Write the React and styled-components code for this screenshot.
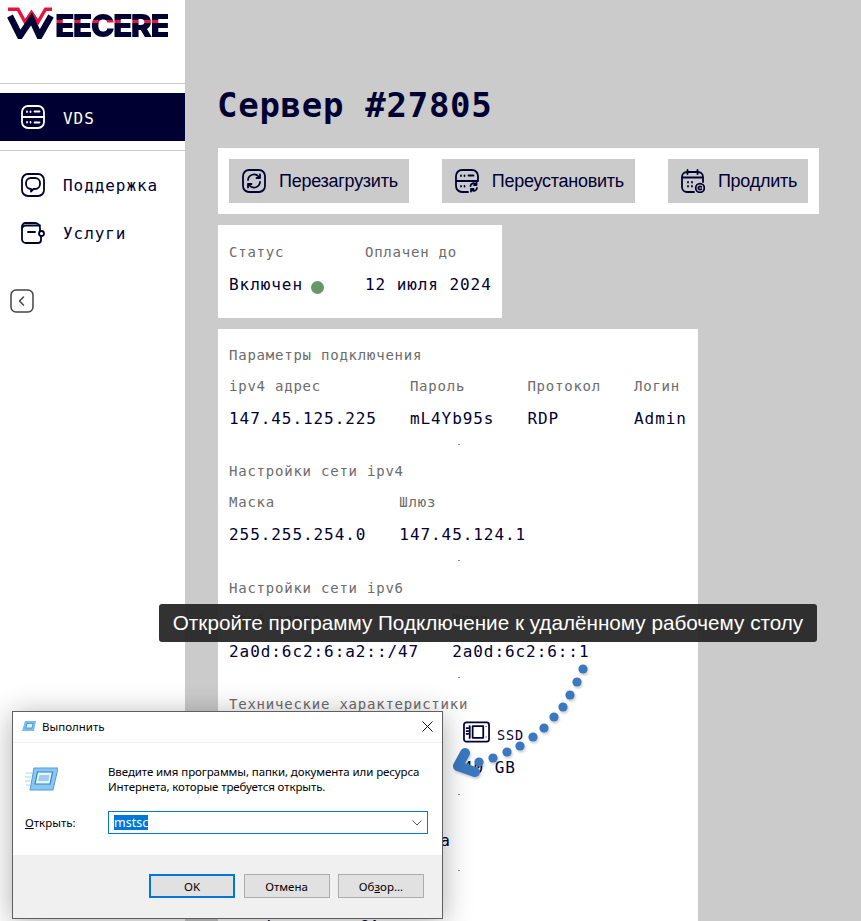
import React from "react";
import styled, { createGlobalStyle } from "styled-components";

const navy = "#000033";
const mono = `"DejaVu Sans Mono", "Liberation Mono", monospace`;

const Global = createGlobalStyle`
  html, body { margin: 0; padding: 0; height: 100%; overflow: hidden; }
  #root { height: 100%; }
  * { box-sizing: border-box; }
`;

const Page = styled.div`
  position: relative;
  display: flex;
  width: 861px;
  height: 921px;
  overflow: hidden;
  background: #cbcbcb;
  font-family: ${mono};
  color: ${navy};
`;

/* ---------- Sidebar ---------- */
const Sidebar = styled.aside`
  flex: 0 0 185px;
  background: #fff;
  display: flex;
  flex-direction: column;
`;
const LogoBox = styled.div`
  height: 84px;
  border-bottom: 1px solid #cbcbcb;
  padding: 7px 0 0 7px;
  display: flex;
  align-items: flex-start;
`;
const LogoWord = styled.span`
  margin: 7px 0 0 -4px;
  font-family: Inter, "Liberation Sans", sans-serif;
  font-weight: 900;
  font-size: 32px;
  line-height: 24px;
  letter-spacing: -1.75px;
  color: transparent;
  background: linear-gradient(to bottom, ${navy} 0, ${navy} 6px, #e8143c 6px, #e8143c 9px, ${navy} 9px);
  -webkit-background-clip: text;
  background-clip: text;
`;
const NavActive = styled.div`
  margin-top: 9px;
  height: 48px;
  background: ${navy};
  color: #fff;
  display: flex;
  align-items: center;
  gap: 18px;
  padding-left: 21px;
`;
const ActiveText = styled.span`
  font-size: 16px;
  letter-spacing: 0.93px;
  padding-top: 2px;
`;
const Divider = styled.div`
  margin-top: 9px;
  height: 1px;
  background: #cbcbcb;
`;
const NavList = styled.nav`
  margin-top: 10px;
  display: flex;
  flex-direction: column;
`;
const NavItem = styled.div`
  height: 48px;
  display: flex;
  align-items: center;
  gap: 18px;
  padding-left: 21px;
`;
const NavText = styled.span`
  font-size: 16px;
  letter-spacing: 0.93px;
`;
const Collapse = styled.div`
  margin: 32px 0 0 10px;
  width: 24px;
  height: 24px;
  color: #444;
`;

/* ---------- Main ---------- */
const Main = styled.main`
  flex: 1;
  min-width: 0;
  padding: 84px 0 0 33px;
  display: flex;
  flex-direction: column;
  align-items: flex-start;
`;
const Title = styled.h1`
  margin: 0 0 22px -1px;
  font-size: 34px;
  line-height: 42px;
  font-weight: 700;
  letter-spacing: 0.72px;
  color: ${navy};
`;
const Toolbar = styled.div`
  background: #fff;
  padding: 11px;
  display: flex;
  gap: 33px;
  margin-bottom: 11px;
`;
const ActionButton = styled.button`
  height: 44px;
  border: 0;
  background: #cbcbcb;
  color: ${navy};
  padding: 0 11px 0 13px;
  display: flex;
  align-items: center;
  gap: 13px;
  font-family: "Liberation Sans", Arial, sans-serif;
  font-size: 18px;
  letter-spacing: -0.26px;
  white-space: nowrap;
`;
const StatusCard = styled.section`
  background: #fff;
  padding: 17px 10px 23px 11px;
  display: flex;
  gap: 41px;
  margin-bottom: 11px;
`;
const Field = styled.div`
  display: flex;
  flex-direction: column;
  gap: 13px;
`;
const Label = styled.div`
  font-size: 14px;
  line-height: 20px;
  letter-spacing: 0.77px;
  color: #6c6c6c;
  white-space: nowrap;
`;
const Value = styled.div`
  font-size: 16px;
  line-height: 20px;
  letter-spacing: 0.93px;
  color: ${navy};
  white-space: nowrap;
  display: flex;
  align-items: center;
`;
const StatusDot = styled.span`
  width: 13px;
  height: 13px;
  margin: 4px 0 0 8px;
  border-radius: 50%;
  background: #659865;
`;
const ParamsCard = styled.section`
  width: 480px;
  background: #fff;
  padding: 16px 10px 0 11px;
  display: flex;
  flex-direction: column;
`;
const SectionTitle = styled(Label)`
  margin-bottom: 11px;
`;
const FieldRow = styled.div`
  display: flex;
  gap: 33px;
`;
const Sep = styled.div`
  align-self: center;
  width: 2px;
  height: 1px;
  margin: 15px 0 ${(p) => (p.$tall ? "17px" : "16px")};
  background: #888;
`;
const SpecGrid = styled.div`
  display: grid;
  grid-template-columns: 114px 114px auto;
  gap: 0 3px;
  margin: -4px 0 1px;
`;
const SpecCol = styled.div`
  display: flex;
  flex-direction: column;
  gap: 15px;
`;
const SpecHead = styled.div`
  height: 22px;
  display: flex;
  align-items: flex-end;
  gap: 7px;
  font-size: 13.5px;
  line-height: 16px;
  letter-spacing: 0.9px;
  color: ${navy};
`;
const CloseValue = styled(Value)`
  margin: -12px 0 4px;
`;
const PlaceValue = styled(Value)`
  margin-top: -2px;
`;
const Flag = styled.svg`
  margin: 0 14px 0 2px;
  flex: none;
`;

/* ---------- Overlays ---------- */
const Tooltip = styled.div`
  position: absolute;
  left: 159px;
  top: 604px;
  width: 658px;
  height: 38px;
  border-radius: 3px;
  background: rgba(34, 34, 34, 0.93);
  color: #fff;
  font-family: "Liberation Sans", Arial, sans-serif;
  font-size: 20.7px;
  line-height: 38px;
  text-align: center;
  white-space: nowrap;
`;
const Arrow = styled.svg`
  position: absolute;
  left: 440px;
  top: 650px;
  filter: drop-shadow(1px 2px 1px rgba(0, 0, 0, 0.2));
`;
const RunWindow = styled.div`
  position: absolute;
  left: 12px;
  top: 711px;
  width: 431px;
  height: 208px;
  background: #fff;
  border: 1px solid #5f5f5f;
  box-shadow: 0 4px 28px rgba(0, 0, 0, 0.32);
  display: flex;
  flex-direction: column;
  font-family: "Noto Sans", "Open Sans", sans-serif;
  font-size: 11.5px;
  color: #000;
`;
const TitleBar = styled.div`
  height: 31px;
  flex: none;
  display: flex;
  align-items: center;
  padding: 0 9px 2px;
  gap: 6px;
  border-bottom: 1px solid #f0f0f0;
`;
const TitleText = styled.span`
  flex: 1;
  white-space: nowrap;
`;
const WinBody = styled.div`
  flex: 1;
  padding: 17px 14px 0 12px;
  display: flex;
  flex-direction: column;
`;
const PromptRow = styled.div`
  display: flex;
  align-items: center;
  height: 38px;
`;
const IconSlot = styled.div`
  flex: 0 0 83px;
  display: flex;
  align-items: center;
`;
const Prompt = styled.div`
  line-height: 15px;
  white-space: nowrap;
  letter-spacing: -0.1px;
`;
const OpenRow = styled.div`
  margin-top: 13px;
  display: flex;
  align-items: center;
`;
const Combo = styled.div`
  flex: 1;
  height: 23px;
  border: 1px solid #0078d7;
  padding: 0 5px;
  display: flex;
  align-items: center;
  justify-content: space-between;
  font-size: 12.5px;
`;
const Selected = styled.span`
  background: #0078d7;
  color: #fff;
  line-height: 15px;
`;
const WinFooter = styled.div`
  flex: 0 0 63px;
  background: #f0f0f0;
  padding: 19px 18px 0 136px;
  display: flex;
  gap: 8.5px;
`;
const WinButton = styled.div`
  width: 86px;
  height: 24px;
  background: #e1e1e1;
  border: ${(p) => (p.$primary ? "2px solid #0078d7" : "1px solid #adadad")};
  display: flex;
  align-items: center;
  justify-content: center;
`;
const Underlined = styled.span`
  text-decoration: underline;
`;

/* ---------- Icons ---------- */
const Ico = ({ size = 24, children, color = "currentColor", w = 1.8 }) => (
  <svg width={size} height={size} viewBox="0 0 24 24" fill="none" stroke={color} strokeWidth={w} strokeLinecap="round" strokeLinejoin="round">
    {children}
  </svg>
);
const ServerIcon = () => (
  <Ico>
    <rect x="1" y="1" width="22" height="22" rx="6" />
    <path d="M1 12h22M6 6.500v.5M9.500 6.500v.5M13.500 6.500h5M6 17v.5M9.500 17v.5M13.500 17.500h5" />
  </Ico>
);
const ChatIcon = () => (
  <Ico>
    <rect x="1" y="1" width="22" height="22" rx="6" />
    <path d="M10 5h4a5 5 0 0 1 5 5v1a5 5 0 0 1-5 5h-1.500l-2.500 2.500V16a5 5 0 0 1-5-5v-1a5 5 0 0 1 5-5Z" />
  </Ico>
);
const WalletIcon = () => (
  <Ico>
    <path d="M20 15.500V19a3 3 0 0 1-3 3H5a4 4 0 0 1-4-4V5.500A3.500 3.500 0 0 1 4.500 2H14a5 5 0 0 1 5 5v2.500" />
    <path d="M1.500 6.500C2 5 3.500 4.500 5 4.500h14M7 11h7" />
    <circle cx="20.500" cy="12.500" r="2.500" />
  </Ico>
);
const BackIcon = () => (
  <Ico w={1.5}>
    <rect x="1" y="1" width="22" height="22" rx="5" />
    <path d="M13.500 8l-4 4 4 4" />
  </Ico>
);
const RebootIcon = () => (
  <Ico>
    <rect x="1" y="1" width="22" height="22" rx="6" />
    <path d="M6 11a6 6 0 0 1 10.500-3.500L18 9M18 5.500V9h-3.500M18 13a6 6 0 0 1-10.500 3.500L6 15M6 18.500V15h3.500" />
  </Ico>
);
const ReinstallIcon = () => (
  <Ico>
    <path d="M13 23H7a6 6 0 0 1-6-6V7a6 6 0 0 1 6-6h10a6 6 0 0 1 6 6v5H1" />
    <path d="M6 6.500v.5M9.500 6.500v.5M13.500 6.500h5M6 17v.5M9.500 17v.5" />
    <path d="M15.500 17a3 3 0 0 1 5.500-1.500M21.500 13.500v2.500h-2.500M22 19a3 3 0 0 1-5.500 1.500M16 22.500V20h2.500" />
  </Ico>
);
const CalendarIcon = () => (
  <Ico>
    <path d="M13 23H6a5 5 0 0 1-5-5V8a5 5 0 0 1 5-5h11a5 5 0 0 1 5 5v5M1 8.500h21M6.500 1v4M16.500 1v4" />
    <path d="M7 13v.5M11 13v.5M7 17v.5M11 17v.5" />
    <circle cx="19" cy="19" r="4.300" />
    <path d="M20.300 17.800a1.700 1.700 0 1 0 0 2.400" />
  </Ico>
);
const SsdIcon = () => (
  <svg width="27" height="22" viewBox="0 0 28 22" fill="none" stroke={navy} strokeWidth="1.800" strokeLinejoin="round">
    <rect x="1" y="1" width="26" height="20" rx="2.500" />
    <rect x="10" y="5" width="11" height="12" />
    <path d="M6 5h1v12H6M3 7h3M3 10h3M3 13h3M24 5v.5M24 16v.5" />
  </svg>
);
const RunSmall = () => (
  <svg width="14" height="12" viewBox="0 0 14 12">
    <path d="M3 1h11l-2 10H0Z" fill="#7fbbe9" />
    <path d="M5 3.500h6l-1 4.500H4Z" fill="#dff0fb" stroke="#3f8ed0" strokeWidth=".8" />
  </svg>
);
const RunLarge = () => (
  <svg width="33" height="24" viewBox="0 0 33 24">
    <path d="M9 1h24l-5 22H5Z" fill="#8cc6ee" stroke="#4b9ddc" strokeWidth="1" />
    <path d="M12.500 5h15l-2.500 12H10Z" fill="#e6f4fc" stroke="#2f86cc" strokeWidth="1.200" />
    <path d="M14.500 8h10l-1 6h-10.500Z" fill="#9fcdf0" />
    <path d="M1 6h6M0 10h6M0 14h5M1 18h4" stroke="#a9d3f1" strokeWidth="1.200" />
  </svg>
);
const Logo = () => (
  <svg width="52" height="32" viewBox="0 0 52 32" fill="none">
    <path d="M1 2.200H11L18 15 24.500 5.500 31 15 38.500 2.200H45" stroke="#e8143c" strokeWidth="3.400" strokeLinejoin="miter" />
    <path d="M3 9 13 29 24.500 12 32.500 29 44 9" stroke={navy} strokeWidth="6.400" strokeLinejoin="miter" />
  </svg>
);

const dots = [
  [143, 19], [137, 32], [130, 45], [123, 57], [114, 67], [104, 78],
  [93, 87], [80, 96], [67, 102], [53, 108], [39, 112],
];

export default function App() {
  return (
    <Page>
      <Global />
      <Sidebar>
        <LogoBox>
          <Logo />
          <LogoWord>EECERE</LogoWord>
        </LogoBox>
        <NavActive>
          <ServerIcon />
          <ActiveText>VDS</ActiveText>
        </NavActive>
        <Divider />
        <NavList>
          <NavItem>
            <ChatIcon />
            <NavText>Поддержка</NavText>
          </NavItem>
          <NavItem>
            <WalletIcon />
            <NavText>Услуги</NavText>
          </NavItem>
        </NavList>
        <Collapse>
          <BackIcon />
        </Collapse>
      </Sidebar>

      <Main>
        <Title>Сервер #27805</Title>
        <Toolbar>
          <ActionButton>
            <RebootIcon />
            Перезагрузить
          </ActionButton>
          <ActionButton>
            <ReinstallIcon />
            Переустановить
          </ActionButton>
          <ActionButton>
            <CalendarIcon />
            Продлить
          </ActionButton>
        </Toolbar>

        <StatusCard>
          <Field>
            <Label>Статус</Label>
            <Value>
              Включен
              <StatusDot />
            </Value>
          </Field>
          <Field>
            <Label>Оплачен до</Label>
            <Value>12 июля 2024</Value>
          </Field>
        </StatusCard>

        <ParamsCard>
          <SectionTitle>Параметры подключения</SectionTitle>
          <FieldRow>
            <Field>
              <Label>ipv4 адрес</Label>
              <Value>147.45.125.225</Value>
            </Field>
            <Field>
              <Label>Пароль</Label>
              <Value>mL4Yb95s</Value>
            </Field>
            <Field>
              <Label>Протокол</Label>
              <Value>RDP</Value>
            </Field>
            <Field>
              <Label>Логин</Label>
              <Value>Admin</Value>
            </Field>
          </FieldRow>
          <Sep />

          <SectionTitle>Настройки сети ipv4</SectionTitle>
          <FieldRow>
            <Field>
              <Label>Маска</Label>
              <Value>255.255.254.0</Value>
            </Field>
            <Field>
              <Label>Шлюз</Label>
              <Value>147.45.124.1</Value>
            </Field>
          </FieldRow>
          <Sep $tall />

          <SectionTitle>Настройки сети ipv6</SectionTitle>
          <FieldRow>
            <Field>
              <Label>ipv6 адрес</Label>
              <Value>2a0d:6c2:6:a2::/47</Value>
            </Field>
            <Field>
              <Label>Шлюз</Label>
              <Value>2a0d:6c2:6::1</Value>
            </Field>
          </FieldRow>
          <Sep />

          <SectionTitle>Технические характеристики</SectionTitle>
          <SpecGrid>
            <SpecCol>
              <SpecHead>CPU</SpecHead>
              <Value>2 vCPU</Value>
            </SpecCol>
            <SpecCol>
              <SpecHead>RAM</SpecHead>
              <Value>4 GB</Value>
            </SpecCol>
            <SpecCol>
              <SpecHead>
                <SsdIcon />
                SSD
              </SpecHead>
              <Value>40 GB</Value>
            </SpecCol>
          </SpecGrid>
          <Sep $tall />

          <SectionTitle>Операционная система</SectionTitle>
          <CloseValue>Windows Server Ultima</CloseValue>
          <Sep $tall />

          <SectionTitle>Расположение</SectionTitle>
          <PlaceValue>
            <Flag width="19" height="13" viewBox="0 0 19 13">
              <rect width="19" height="13" fill="#d9d9d9" />
              <rect width="19" height="2" fill="#c4485a" />
              <rect width="8" height="7" fill="#44508c" />
            </Flag>
            Фремонт, CA
          </PlaceValue>
        </ParamsCard>
      </Main>

      <Tooltip>Откройте программу Подключение к удалённому рабочему столу</Tooltip>

      <Arrow width="160" height="140" viewBox="0 0 160 140">
        {dots.map(([cx, cy]) => (
          <circle key={cx} cx={cx} cy={cy} r="4.600" fill="#3a78bf" />
        ))}
        <path d="M25 103 18 116 35 122" fill="none" stroke="#3a78bf" strokeWidth="10" strokeLinecap="round" strokeLinejoin="round" />
      </Arrow>

      <RunWindow>
        <TitleBar>
          <RunSmall />
          <TitleText>Выполнить</TitleText>
          <svg width="11" height="11" viewBox="0 0 11 11" stroke="#111" strokeWidth="1" fill="none">
            <path d="M.5.5l10 10M10.500.5l-10 10" />
          </svg>
        </TitleBar>
        <WinBody>
          <PromptRow>
            <IconSlot>
              <RunLarge />
            </IconSlot>
            <Prompt>
              Введите имя программы, папки, документа или ресурса
              <br />
              Интернета, которые требуется открыть.
            </Prompt>
          </PromptRow>
          <OpenRow>
            <IconSlot>
              <span>
                <Underlined>О</Underlined>ткрыть:
              </span>
            </IconSlot>
            <Combo>
              <Selected>mstsc</Selected>
              <svg width="10" height="6" viewBox="0 0 10 6" fill="none" stroke="#555" strokeWidth="1">
                <path d="M.5.5 5 5 9.500.5" />
              </svg>
            </Combo>
          </OpenRow>
        </WinBody>
        <WinFooter>
          <WinButton $primary>OK</WinButton>
          <WinButton>Отмена</WinButton>
          <WinButton>
            <span>
              Об<Underlined>з</Underlined>ор...
            </span>
          </WinButton>
        </WinFooter>
      </RunWindow>
    </Page>
  );
}
